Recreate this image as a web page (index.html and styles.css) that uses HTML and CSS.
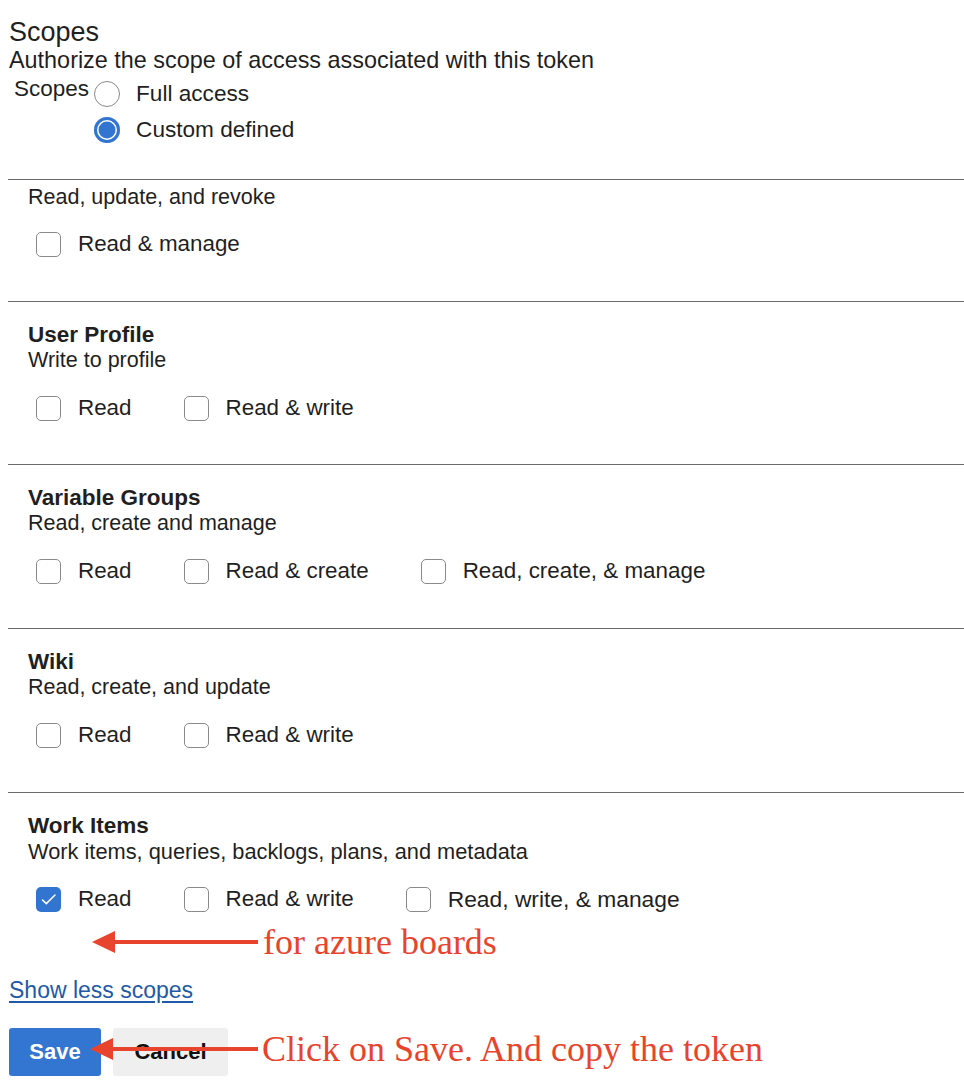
FILE: index.html
```html
<!DOCTYPE html>
<html lang="en">
<head>
<meta charset="utf-8">
<title>Scopes</title>
<link rel="stylesheet" href="styles.css">
</head>
<body>
<div class="page">
  <h1 class="title">Scopes</h1>
  <p class="subtitle">Authorize the scope of access associated with this token</p>
  <div class="scope-choice">
    <span class="choice-label">Scopes</span>
    <div class="radios">
      <div class="radio"><span class="radio-dot"></span><span>Full access</span></div>
      <div class="radio"><span class="radio-dot checked"></span><span>Custom defined</span></div>
    </div>
  </div>

  <div class="section first">
    <div class="desc">Read, update, and revoke</div>
    <div class="options">
      <div class="option"><span class="box"></span><span>Read &amp; manage</span></div>
    </div>
  </div>

  <div class="section profile">
    <div class="sec-title">User Profile</div>
    <div class="desc">Write to profile</div>
    <div class="options">
      <div class="option"><span class="box"></span><span>Read</span></div>
      <div class="option"><span class="box"></span><span>Read &amp; write</span></div>
    </div>
  </div>

  <div class="section">
    <div class="sec-title">Variable Groups</div>
    <div class="desc">Read, create and manage</div>
    <div class="options">
      <div class="option"><span class="box"></span><span>Read</span></div>
      <div class="option"><span class="box"></span><span>Read &amp; create</span></div>
      <div class="option"><span class="box"></span><span>Read, create, &amp; manage</span></div>
    </div>
  </div>

  <div class="section">
    <div class="sec-title">Wiki</div>
    <div class="desc">Read, create, and update</div>
    <div class="options">
      <div class="option"><span class="box"></span><span>Read</span></div>
      <div class="option"><span class="box"></span><span>Read &amp; write</span></div>
    </div>
  </div>

  <div class="section last">
    <div class="sec-title">Work Items</div>
    <div class="desc wide">Work items, queries, backlogs, plans, and metadata</div>
    <div class="options">
      <div class="option"><span class="box checked"><svg viewBox="0 0 25 25" width="25" height="25"><path d="M6.5 13 L10.3 16.6 L19 8" fill="none" stroke="#fff" stroke-width="1.5" stroke-linecap="round" stroke-linejoin="round"/></svg></span><span>Read</span></div>
      <div class="option"><span class="box"></span><span>Read &amp; write</span></div>
      <div class="option"><span class="box"></span><span class="wide">Read, write, &amp; manage</span></div>
    </div>
  </div>

  <div class="note note-boards">
    <svg class="arrow" viewBox="0 0 166 24" width="166" height="24"><polygon points="0,12 23,1 23,23" fill="#e8432d"/><rect x="20" y="10" width="146" height="4" fill="#e8432d"/></svg>
    <span class="note-text">for azure boards</span>
  </div>

  <a class="show-less" href="#">Show less scopes</a>

  <div class="buttons">
    <button class="btn btn-save">Save</button>
    <button class="btn btn-cancel">Cancel</button>
    <div class="note note-save">
      <svg class="arrow" viewBox="0 0 168 24" width="168" height="24"><polygon points="0,12 23,1 23,23" fill="#e8432d"/><rect x="20" y="10" width="148" height="4" fill="#e8432d"/></svg>
      <span class="note-text">Click on Save. And copy the token</span>
    </div>
  </div>
</div>
</body>
</html>
```

FILE: styles.css
```css
html, body {
  margin: 0;
  padding: 0;
  background: #fff;
}

body {
  font-family: "Liberation Sans", Arial, Helvetica, sans-serif;
  color: #1f1f1f;
}

.page {
  padding-left: 8px;
  width: 956px;
}

.title {
  margin: 0;
  padding-top: 18px;
  padding-left: 1px;
  font-size: 27px;
  line-height: 28px;
  font-weight: 400;
}

.subtitle {
  margin: 0;
  padding-left: 1px;
  font-size: 23.4px;
  line-height: 28px;
}

.scope-choice {
  display: flex;
  align-items: flex-start;
  margin-top: 1px;
  padding-left: 6px;
}

.choice-label {
  font-size: 22.5px;
  line-height: 28px;
  margin-right: 5px;
}

.radios {
  display: flex;
  flex-direction: column;
  padding-top: 1px;
}

.radio {
  display: flex;
  align-items: center;
  height: 36px;
  font-size: 22.6px;
}

.radio-dot {
  box-sizing: border-box;
  width: 26px;
  height: 26px;
  border-radius: 50%;
  border: 1px solid #8a8a8a;
  margin-right: 16px;
  flex: none;
}

.radio-dot.checked {
  border: none;
  background: #3275d0;
  box-shadow: inset 0 0 0 3px #3275d0, inset 0 0 0 4.5px #fff;
}

.section {
  border-top: 1px solid #6c6c6c;
  padding: 20px 0 39px 20px;
}

.section.first {
  margin-top: 31px;
  padding-top: 5px;
  padding-bottom: 39px;
}

.section.profile {
  padding-bottom: 38px;
}

.section.last {
  padding-bottom: 0;
}

.sec-title {
  font-weight: 700;
  font-size: 22.5px;
  line-height: 26px;
}

.desc {
  font-size: 21.5px;
  line-height: 25px;
}

.desc.wide {
  font-size: 21.8px;
}

.options {
  display: flex;
  align-items: center;
  height: 36px;
  margin-top: 17px;
  padding-left: 8px;
}

.section.first .options {
  margin-top: 16px;
}

.option {
  display: flex;
  align-items: center;
  font-size: 22.4px;
  margin-right: 52px;
}

.option .wide {
  font-size: 22.8px;
}

.box {
  box-sizing: border-box;
  width: 25px;
  height: 25px;
  border-radius: 5px;
  border: 1px solid #8a8a8a;
  margin-right: 17px;
  flex: none;
  display: flex;
}

.box.checked {
  border: none;
  background: #3275d0;
}

.note {
  display: flex;
  align-items: center;
  height: 40px;
  color: #e8432d;
}

.note-boards {
  margin-top: 5px;
  padding-left: 84px;
}

.arrow {
  flex: none;
  margin-right: 5px;
}

.note-text {
  font-family: "Liberation Serif", "Times New Roman", serif;
  font-size: 36px;
  line-height: 40px;
  white-space: nowrap;
}

.show-less {
  display: block;
  width: max-content;
  margin-top: 14px;
  margin-left: 1px;
  font-size: 23px;
  line-height: 28px;
  color: #1e5aa6;
  text-decoration: underline;
  text-underline-offset: 3px;
}

.buttons {
  position: relative;
  display: flex;
  gap: 12px;
  margin-top: 24px;
  padding-left: 1px;
}

.btn {
  height: 48px;
  border: none;
  border-radius: 3px;
  font-family: "Liberation Sans", Arial, sans-serif;
  font-weight: 700;
  font-size: 22px;
  padding: 0;
}

.btn-save {
  width: 92px;
  background: #3276d1;
  color: #fff;
}

.btn-cancel {
  width: 115px;
  background: #efefef;
  color: #111;
}

.note-save {
  position: absolute;
  left: 82px;
  top: 1px;
}

.note-save .arrow {
  margin-right: 4px;
}
```
